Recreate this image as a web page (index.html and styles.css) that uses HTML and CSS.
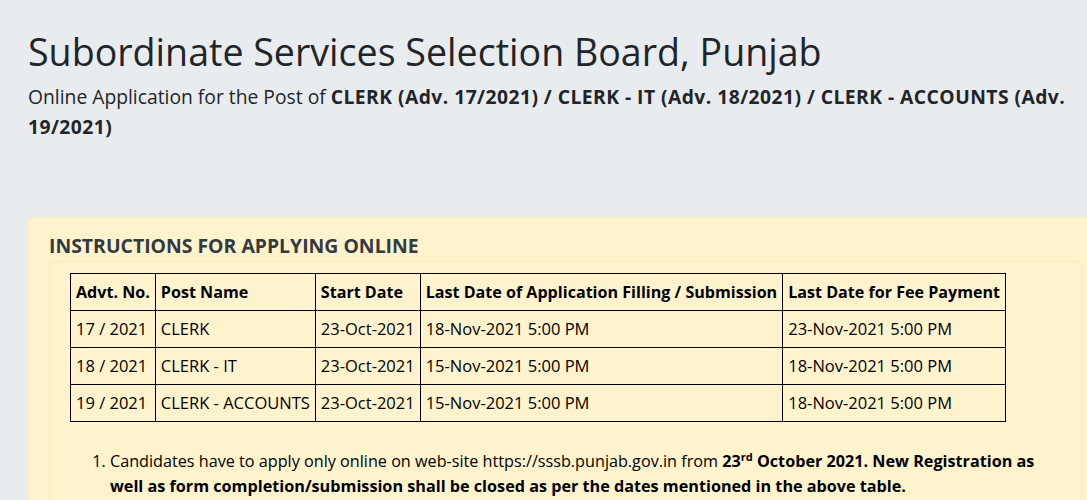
FILE: index.html
```html
<!DOCTYPE html>
<html lang="en">
<head>
<meta charset="utf-8">
<title>SSSB Punjab</title>
<link rel="stylesheet" href="styles.css">
</head>
<body>
<div class="page">
  <h1 class="title">Subordinate Services Selection Board, Punjab</h1>
  <p class="subtitle">Online Application for the Post of <b>CLERK (Adv. 17/2021) / CLERK - IT (Adv. 18/2021) / CLERK - ACCOUNTS (Adv. 19/2021)</b></p>

  <div class="notice">
    <h5 class="notice-title">INSTRUCTIONS FOR APPLYING ONLINE</h5>
    <div class="notice-body">
      <table class="posts">
        <thead>
          <tr>
            <th>Advt. No.</th>
            <th>Post Name</th>
            <th>Start Date</th>
            <th>Last Date of Application Filling / Submission</th>
            <th>Last Date for Fee Payment</th>
          </tr>
        </thead>
        <tbody>
          <tr>
            <td>17 / 2021</td>
            <td>CLERK</td>
            <td>23-Oct-2021</td>
            <td>18-Nov-2021 5:00 PM</td>
            <td>23-Nov-2021 5:00 PM</td>
          </tr>
          <tr>
            <td>18 / 2021</td>
            <td>CLERK - IT</td>
            <td>23-Oct-2021</td>
            <td>15-Nov-2021 5:00 PM</td>
            <td>18-Nov-2021 5:00 PM</td>
          </tr>
          <tr>
            <td>19 / 2021</td>
            <td>CLERK - ACCOUNTS</td>
            <td>23-Oct-2021</td>
            <td>15-Nov-2021 5:00 PM</td>
            <td>18-Nov-2021 5:00 PM</td>
          </tr>
        </tbody>
      </table>

      <ol class="rules">
        <li>Candidates have to apply only online on web-site https://sssb.punjab.gov.in from <b>23<sup>rd</sup> October 2021. New Registration as well as form completion/submission shall be closed as per the dates mentioned in the above table.</b></li>
      </ol>
    </div>
  </div>
</div>
</body>
</html>
```

FILE: styles.css
```css
html, body {
  margin: 0;
  padding: 0;
  overflow: hidden;
  background: #e9ecef;
}

body {
  font-family: "Open Sans", "Noto Sans", "Liberation Sans", sans-serif;
  font-size: 16.2px;
  line-height: 1.5;
  color: #212529;
}

.page {
  width: 1076px;
  padding: 29px 0 0 28px;
}

.title {
  margin: 0;
  font-size: 37.6px;
  font-weight: 400;
  line-height: 1.2;
  color: #212529;
}

.subtitle {
  width: 1050px;
  margin: 8px 0 0;
  font-size: 19.3px;
  line-height: 30px;
}

.subtitle b {
  font-weight: 700;
  letter-spacing: 0.45px;
}

.notice {
  margin-top: 75px;
  background: #fff3cd;
  border: 1px solid #ffeeba;
  border-radius: 5px;
  padding: 17px 21px 20px;
  color: #000;
}

.notice-title {
  margin: 0 0 3px -1px;
  font-size: 19.4px;
  font-weight: 700;
  line-height: 22.5px;
  color: #343a40;
}

.notice-body {
  border: 1px solid #fcecbd;
  border-radius: 4px;
  padding: 11px 19px 20px;
}

.posts {
  border-collapse: collapse;
}

.posts th,
.posts td {
  border: 1px solid #000;
  padding: 6px 5px;
  text-align: left;
  white-space: nowrap;
  line-height: 24px;
}

.posts th {
  font-size: 16.1px;
  font-weight: 700;
}

.posts td {
  font-size: 16.5px;
}

.rules {
  margin: 27px 0 0;
  padding-left: 40px;
  line-height: 25px;
}

.rules b {
  font-weight: 700;
}

.rules sup {
  font-size: 11px;
  line-height: 0;
}
```
